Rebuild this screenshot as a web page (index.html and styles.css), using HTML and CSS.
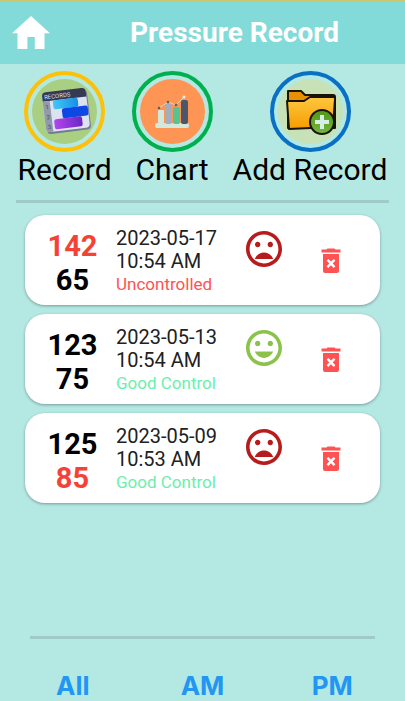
FILE: index.html
```html
<!DOCTYPE html>
<html lang="en">
<head>
<meta charset="utf-8">
<meta name="viewport" content="width=device-width, initial-scale=1">
<title>Pressure Record</title>
<link rel="stylesheet" href="styles.css">
</head>
<body>
<svg class="sprite" aria-hidden="true">
  <symbol id="sad" viewBox="2 2 20 20"><path d="M11.99 2C6.47 2 2 6.48 2 12s4.47 10 9.99 10C17.52 22 22 17.52 22 12S17.52 2 11.99 2zM12 20c-4.42 0-8-3.58-8-8s3.58-8 8-8 8 3.58 8 8-3.58 8-8 8zm3.5-9c.83 0 1.5-.67 1.5-1.5S16.33 8 15.5 8 14 8.67 14 9.5s.67 1.5 1.5 1.5zm-7 0c.83 0 1.5-.67 1.5-1.5S9.33 8 8.5 8 7 8.67 7 9.5 7.67 11 8.5 11zm3.5 3c-2.33 0-4.31 1.46-5.11 3.5h10.22c-.8-2.04-2.78-3.5-5.11-3.5z"/></symbol>
  <symbol id="happy" viewBox="2 2 20 20"><path d="M11.99 2C6.47 2 2 6.48 2 12s4.47 10 9.99 10C17.52 22 22 17.52 22 12S17.52 2 11.99 2zM12 20c-4.42 0-8-3.58-8-8s3.58-8 8-8 8 3.58 8 8-3.58 8-8 8zm3.5-9c.83 0 1.5-.67 1.5-1.5S16.33 8 15.5 8 14 8.67 14 9.5s.67 1.5 1.5 1.5zm-7 0c.83 0 1.5-.67 1.5-1.5S9.33 8 8.5 8 7 8.67 7 9.5 7.67 11 8.5 11zm3.5 6.5c2.33 0 4.31-1.46 5.11-3.5H6.89c.8 2.04 2.78 3.5 5.11 3.5z"/></symbol>
  <symbol id="trash" viewBox="0 0 20 26"><path d="M.5 1.500h5L6.500.5h7l1 1h5v3H.5z"/><path fill-rule="evenodd" d="M2 6h16v17q0 2-2 2H4q-2 0-2-2zM5.600 12.600 8.300 15.400 5.600 18.200 7.300 19.900 10 17.200 12.700 19.900 14.400 18.200 11.700 15.400 14.400 12.600 12.700 10.900 10 13.600 7.300 10.900z"/></symbol>
</svg>

<header class="topbar">
  <a class="home" href="#" aria-label="Home">
    <svg viewBox="0 0 38 33"><path fill="#fff" d="M19 0 38 17.300H32.500V33H22.800V21H15.400V33H5.500V17.300H0z"/></svg>
  </a>
  <h1>Pressure Record</h1>
</header>

<main>
  <nav class="actions">
    <a class="action" href="#">
      <svg class="badge" viewBox="0 0 81 81">
        <defs>
          <linearGradient id="cyan"><stop stop-color="#42c8f5"/><stop offset="1" stop-color="#168ee9"/></linearGradient>
          <linearGradient id="violet"><stop stop-color="#b246ed"/><stop offset="1" stop-color="#6a27c3"/></linearGradient>
        </defs>
        <circle cx="40.500" cy="40.500" r="38.500" fill="#b4e8e3" stroke="#ffc107" stroke-width="4"/>
        <circle cx="40.500" cy="40.500" r="32.500" fill="#a8cf82"/>
        <g transform="rotate(-7 42 40)">
          <rect x="21" y="21" width="44" height="40" rx="4" fill="#757b91"/>
          <rect x="20" y="20" width="44" height="39" rx="4" fill="#dce2ef"/>
          <path d="M24 19h36q4 0 4 4v5H20v-5q0-4 4-4z" fill="#343a52"/>
          <path d="M20 28h7v31h-3q-4 0-4-4z" fill="#9299ae"/>
          <text class="mini" x="22" y="26">RECORDS</text>
          <text class="mini digit" x="22" y="36">1</text>
          <text class="mini digit" x="22" y="46">2</text>
          <text class="mini digit" x="22" y="56">3</text>
          <rect x="30" y="28" width="25" height="9" rx="2" fill="url(#cyan)"/>
          <rect x="38" y="37" width="26" height="10" rx="2" fill="#0d47e4"/>
          <rect x="29" y="47" width="28" height="10" rx="2" fill="url(#violet)"/>
        </g>
      </svg>
      <span>Record</span>
    </a>
    <a class="action" href="#">
      <svg class="badge" viewBox="0 0 81 81">
        <circle cx="40.500" cy="40.500" r="38.500" fill="#b4e8e3" stroke="#00b04f" stroke-width="4"/>
        <circle cx="40.500" cy="40.500" r="32.500" fill="#ff9554"/>
        <rect x="23" y="52" width="34" height="5" rx="2" fill="#d1e8df"/>
        <rect x="26" y="39" width="6" height="13" rx="1" fill="#d1e8df"/>
        <rect x="33" y="33" width="7" height="20" rx="2" fill="#a4adbd"/>
        <rect x="41" y="36" width="7" height="17" rx="2" fill="#55c493"/>
        <rect x="49" y="29" width="7" height="24" rx="2" fill="#4d5668"/>
        <path d="M27 37 36 31 44 34 52 26" fill="none" stroke="#ead3bd"/>
        <circle cx="27" cy="37" r="1.300" fill="#665b5b"/><circle cx="36" cy="31" r="1.300" fill="#665b5b"/><circle cx="44" cy="34" r="1.300" fill="#665b5b"/><circle cx="52" cy="26" r="1.500" fill="#e4eee6"/>
      </svg>
      <span>Chart</span>
    </a>
    <a class="action" href="#">
      <svg class="badge" viewBox="0 0 81 81">
        <defs>
          <linearGradient id="gold" x2="0" y2="1"><stop stop-color="#ffc83f"/><stop offset="1" stop-color="#f59c00"/></linearGradient>
          <linearGradient id="leaf" x2="0" y2="1"><stop stop-color="#529718"/><stop offset="1" stop-color="#76b53b"/></linearGradient>
        </defs>
        <circle cx="40.500" cy="40.500" r="38.500" fill="#b4e8e3" stroke="#0870c5" stroke-width="4"/>
        <circle cx="40.500" cy="40.500" r="32.500" fill="#c7e2b6"/>
        <path d="M18 57V20h13l4 4h28q2 0 2 2V57z" fill="#e89100" stroke="#171407" stroke-width="2" stroke-linejoin="round"/>
        <path d="M17 30h17l6-4h24q1 0 1 2l-2 28-44 2z" fill="url(#gold)" stroke="#171407" stroke-width="2" stroke-linejoin="round"/>
        <circle cx="52" cy="51" r="12" fill="url(#leaf)" stroke="#171407" stroke-width="2"/>
        <path d="M50 44h4v5h5v4h-5v5h-4v-5h-5v-4h5z" fill="#d5eee6"/>
      </svg>
      <span>Add Record</span>
    </a>
  </nav>
  <hr class="rule">

  <ul class="records">
    <li class="card">
      <div class="reading"><span class="high">142</span><span>65</span></div>
      <div class="info"><span>2023-05-17</span><span>10:54 AM</span><span class="status bad">Uncontrolled</span></div>
      <svg class="face sad" role="img" aria-label="Sad"><use href="#sad"/></svg>
      <button class="delete" type="button" aria-label="Delete"><svg><use href="#trash"/></svg></button>
    </li>
    <li class="card">
      <div class="reading"><span>123</span><span>75</span></div>
      <div class="info"><span>2023-05-13</span><span>10:54 AM</span><span class="status good">Good Control</span></div>
      <svg class="face happy" role="img" aria-label="Happy"><use href="#happy"/></svg>
      <button class="delete" type="button" aria-label="Delete"><svg><use href="#trash"/></svg></button>
    </li>
    <li class="card">
      <div class="reading"><span>125</span><span class="high">85</span></div>
      <div class="info"><span>2023-05-09</span><span>10:53 AM</span><span class="status good">Good Control</span></div>
      <svg class="face sad" role="img" aria-label="Sad"><use href="#sad"/></svg>
      <button class="delete" type="button" aria-label="Delete"><svg><use href="#trash"/></svg></button>
    </li>
  </ul>
</main>

<footer>
  <hr class="rule">
  <div class="filters">
    <button type="button">All</button>
    <button type="button">AM</button>
    <button type="button">PM</button>
  </div>
</footer>
</body>
</html>
```
FILE: styles.css
```css
* {
  box-sizing: border-box;
}

body {
  display: flex;
  flex-direction: column;
  min-height: 100vh;
  margin: 0;
  background: #b4e8e3;
  color: #000;
  font-family: Roboto, sans-serif;
}

svg {
  display: block;
}

.sprite {
  position: absolute;
  width: 0;
  height: 0;
}

.topbar {
  display: grid;
  grid-template-columns: 64px 1fr;
  align-items: center;
  height: 64px;
  border-top: 1px solid #cbc76c;
  background: #82dbd8;
}

.home {
  padding-left: 12px;
}

.home svg {
  width: 38px;
  height: 33px;
}

h1 {
  margin: 0;
  color: #fff;
  font-size: 28px;
  line-height: 32px;
  text-align: center;
}

main {
  flex: 1;
}

.actions {
  display: flex;
  justify-content: center;
  gap: 20px;
  padding-top: 7px;
}

.action {
  display: flex;
  flex-direction: column;
  align-items: center;
  color: #000;
  font-size: 30px;
  line-height: 36px;
  text-decoration: none;
  white-space: nowrap;
}

.badge {
  width: 81px;
  height: 81px;
}

.mini {
  fill: #d9dfed;
  font-size: 6px;
}

.digit {
  fill: #41485e;
}

.rule {
  height: 3px;
  margin: 12px 16px 0;
  border: 0;
  background: #9fcbc7;
}

.records {
  display: grid;
  gap: 9px;
  margin: 0;
  padding: 12px 25px;
  list-style: none;
}

.card {
  display: grid;
  grid-template-columns: 91px 130px 36px 1fr;
  height: 90px;
  padding-top: 12px;
  border-radius: 20px;
  background: #fff;
  box-shadow: 0 1px 3px #0005;
}

.reading,
.info {
  display: flex;
  flex-direction: column;
}

.reading {
  padding: 2px 0 0 4px;
  font-size: 29px;
  font-weight: 700;
  line-height: 34px;
  text-align: center;
}

.high {
  color: #f44336;
}

.info {
  color: #212121;
  font-size: 20px;
  line-height: 23px;
}

.status {
  font-size: 17px;
}

.bad {
  color: #ff5252;
}

.good {
  color: #69f0ae;
}

.face {
  width: 36px;
  height: 36px;
  margin-top: 4px;
}

.sad {
  fill: #b71c1c;
}

.happy {
  fill: #8bc34a;
}

.delete {
  align-self: start;
  justify-self: center;
  margin-top: 21px;
  padding: 0;
  border: 0;
  background: none;
  fill: #ff5252;
}

.delete svg {
  width: 20px;
  height: 26px;
}

footer .rule {
  margin: 0 30px;
}

.filters {
  display: grid;
  grid-template-columns: repeat(3, 1fr);
  padding: 31px 8px 0;
}

.filters button {
  height: 31px;
  padding: 0;
  border: 0;
  background: none;
  color: #2196f3;
  font: 700 26px/32px Inter, sans-serif;
}
```
